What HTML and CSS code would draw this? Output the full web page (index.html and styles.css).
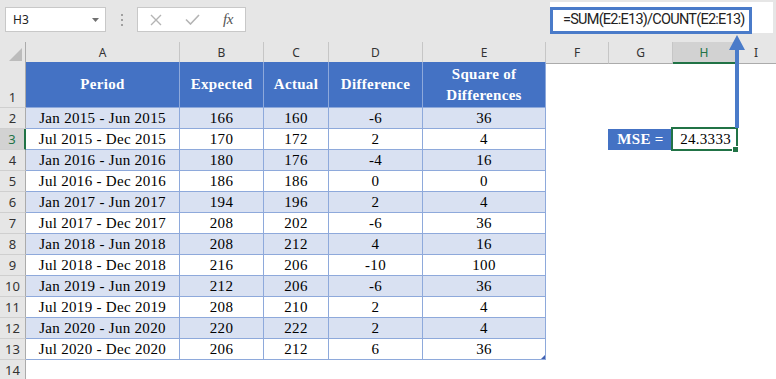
FILE: index.html
```html
<!DOCTYPE html>
<html>
<head>
<meta charset="utf-8">
<link rel="stylesheet" href="styles.css">
</head>
<body>
<div class="topbar">
  <div class="namebox"><span>H3</span><svg width="7" height="4" viewBox="0 0 7 4"><polygon points="0,0 7,0 3.5,4" fill="#707070"/></svg></div>
  <div class="sep"><svg width="4" height="14" viewBox="0 0 4 14"><rect x="1" y="1" width="2" height="2" fill="#a0a0a0"/><rect x="1" y="6" width="2" height="2" fill="#a0a0a0"/><rect x="1" y="11" width="2" height="2" fill="#a0a0a0"/></svg></div>
  <div class="fxbox">
    <svg class="ic-x" width="12" height="12" viewBox="0 0 12 12"><path d="M1 1L11 11M11 1L1 11" stroke="#b4b4b4" stroke-width="1.4"/></svg>
    <svg class="ic-ok" width="15" height="11" viewBox="0 0 15 11"><path d="M1 5.5L5.5 10L14 1" fill="none" stroke="#b4b4b4" stroke-width="1.6"/></svg>
    <span class="fx">fx</span>
  </div>
  <div class="formula"><div class="fbox">=SUM(E2:E13)/COUNT(E2:E13)</div></div>
</div>

<div class="sheet">
  <div class="row colhdr">
    <div class="corner"><svg width="13" height="13" viewBox="0 0 13 13"><polygon points="13,0 13,13 0,13" fill="#bcbcbc"/></svg></div>
    <div class="ch">A</div><div class="ch">B</div><div class="ch">C</div><div class="ch">D</div><div class="ch">E</div><div class="ch">F</div><div class="ch">G</div><div class="ch sel">H</div><div class="ch last">I</div>
  </div>
  <div class="row r1">
    <div class="rh">1</div>
    <div class="c h">Period</div><div class="c h">Expected</div><div class="c h">Actual</div><div class="c h">Difference</div><div class="c h">Square of<br>Differences</div>
    <div></div><div></div><div></div><div></div>
  </div>
  <div class="row alt"><div class="rh">2</div><div class="c">Jan 2015 - Jun 2015</div><div class="c">166</div><div class="c">160</div><div class="c">-6</div><div class="c">36</div><div></div><div></div><div></div><div></div></div>
  <div class="row"><div class="rh sel">3</div><div class="c">Jul 2015 - Dec 2015</div><div class="c">170</div><div class="c">172</div><div class="c">2</div><div class="c">4</div><div></div><div class="mse">MSE =</div><div class="val">24.3333<span class="handle"></span></div><div></div></div>
  <div class="row alt"><div class="rh">4</div><div class="c">Jan 2016 - Jun 2016</div><div class="c">180</div><div class="c">176</div><div class="c">-4</div><div class="c">16</div><div></div><div></div><div></div><div></div></div>
  <div class="row"><div class="rh">5</div><div class="c">Jul 2016 - Dec 2016</div><div class="c">186</div><div class="c">186</div><div class="c">0</div><div class="c">0</div><div></div><div></div><div></div><div></div></div>
  <div class="row alt"><div class="rh">6</div><div class="c">Jan 2017 - Jun 2017</div><div class="c">194</div><div class="c">196</div><div class="c">2</div><div class="c">4</div><div></div><div></div><div></div><div></div></div>
  <div class="row"><div class="rh">7</div><div class="c">Jul 2017 - Dec 2017</div><div class="c">208</div><div class="c">202</div><div class="c">-6</div><div class="c">36</div><div></div><div></div><div></div><div></div></div>
  <div class="row alt"><div class="rh">8</div><div class="c">Jan 2018 - Jun 2018</div><div class="c">208</div><div class="c">212</div><div class="c">4</div><div class="c">16</div><div></div><div></div><div></div><div></div></div>
  <div class="row"><div class="rh">9</div><div class="c">Jul 2018 - Dec 2018</div><div class="c">216</div><div class="c">206</div><div class="c">-10</div><div class="c">100</div><div></div><div></div><div></div><div></div></div>
  <div class="row alt"><div class="rh">10</div><div class="c">Jan 2019 - Jun 2019</div><div class="c">212</div><div class="c">206</div><div class="c">-6</div><div class="c">36</div><div></div><div></div><div></div><div></div></div>
  <div class="row"><div class="rh">11</div><div class="c">Jul 2019 - Dec 2019</div><div class="c">208</div><div class="c">210</div><div class="c">2</div><div class="c">4</div><div></div><div></div><div></div><div></div></div>
  <div class="row alt"><div class="rh">12</div><div class="c">Jan 2020 - Jun 2020</div><div class="c">220</div><div class="c">222</div><div class="c">2</div><div class="c">4</div><div></div><div></div><div></div><div></div></div>
  <div class="row"><div class="rh">13</div><div class="c">Jul 2020 - Dec 2020</div><div class="c">206</div><div class="c">212</div><div class="c">6</div><div class="c end">36</div><div></div><div></div><div></div><div></div></div>
  <div class="row"><div class="rh">14</div><div></div><div></div><div></div><div></div><div></div><div></div><div></div><div></div><div></div></div>
</div>

<svg class="arrow" width="18" height="96" viewBox="0 0 18 96"><polygon points="9,2 17,17 1,17" fill="#4a7bc9"/><rect x="7" y="15" width="4" height="80" fill="#4a7bc9"/></svg>
</body>
</html>
```

FILE: styles.css
```css
body {
  margin: 0;
  width: 776px;
  height: 379px;
  overflow: hidden;
  background: #fff;
  position: relative;
  font-family: "Noto Sans", "Liberation Sans", sans-serif;
}

.topbar {
  height: 42px;
  background: #e6e6e6;
  display: flex;
  align-items: flex-start;
}

.namebox {
  margin: 7px 0 0 5px;
  width: 101px;
  height: 25px;
  box-sizing: border-box;
  border: 1px solid #c8c8c8;
  background: #fff;
  display: flex;
  align-items: center;
  justify-content: space-between;
  padding: 0 6px 0 7px;
  font-size: 12px;
  color: #222;
}

.sep {
  width: 31px;
  height: 25px;
  margin-top: 7px;
  display: flex;
  align-items: center;
  justify-content: center;
}

.fxbox {
  margin-top: 7px;
  width: 109px;
  height: 25px;
  box-sizing: border-box;
  border: 1px solid #c8c8c8;
  background: #fff;
  display: flex;
  align-items: center;
}

.ic-x { margin-left: 12px; }
.ic-ok { margin-left: 23px; }

.fx {
  margin-left: 23px;
  font-family: "Liberation Serif", serif;
  font-style: italic;
  font-size: 15px;
  color: #555;
  letter-spacing: -0.5px;
}

.formula {
  margin: 2px 0 0 304px;
  width: 223px;
  height: 31px;
  background: #fff;
}

.fbox {
  margin-top: 5px;
  width: 202px;
  height: 27px;
  box-sizing: border-box;
  border: 3px solid #4a7bc9;
  padding-left: 10px;
  font-family: Roboto, "Liberation Sans", sans-serif;
  font-size: 14.5px;
  letter-spacing: -0.75px;
  line-height: 20px;
  color: #222;
  white-space: nowrap;
  overflow: hidden;
}

.row {
  display: grid;
  grid-template-columns: 26px 154px 84px 65px 94px 123px 63px 64px 63px 1fr;
  height: 21px;
}

.row > div { box-sizing: border-box; }

.colhdr { height: 20px; }
.r1 { height: 46px; }

.corner {
  background: #e6e6e6;
  border-right: 1px solid #ababab;
  border-bottom: 1px solid #ababab;
  display: flex;
  align-items: flex-end;
  justify-content: flex-end;
  padding: 0 3px 2px 0;
}

.ch {
  background: #e6e6e6;
  border-right: 1px solid #c6c6c6;
  border-bottom: 1px solid #ababab;
  font-size: 12px;
  color: #333;
  text-align: center;
  line-height: 19px;
  padding-top: 1px;
}

.ch.last { border-right: none; }

.ch.sel {
  background: #d2d2d2;
  color: #217346;
  border-bottom: 2px solid #217346;
}

.rh {
  background: #e6e6e6;
  border-right: 1px solid #ababab;
  border-bottom: 1px solid #cfcfcf;
  font-size: 13px;
  color: #333;
  display: flex;
  align-items: center;
  justify-content: center;
  line-height: 20px;
}

.r1 .rh { align-items: flex-end; }

.rh.sel {
  background: #d2d2d2;
  color: #217346;
  border-right: 2px solid #217346;
}

.c {
  display: flex;
  align-items: center;
  justify-content: center;
  font-family: "Liberation Serif", serif;
  font-size: 15px;
  letter-spacing: 0.3px;
  color: #000;
  border-right: 1px solid #8ea9db;
  border-bottom: 1px solid #8ea9db;
  line-height: 20px;
  white-space: nowrap;
}

.alt .c { background: #d9e1f2; }

.c.h {
  background: #4472c4;
  color: #fff;
  font-weight: bold;
  text-align: center;
  line-height: 21px;
}

.c.end { position: relative; }
.c.end::after {
  content: "";
  position: absolute;
  right: 0;
  bottom: 0;
  border-left: 4px solid transparent;
  border-bottom: 4px solid #3f5fb0;
}

.mse {
  background: #4472c4;
  color: #fff;
  font-family: "Liberation Serif", serif;
  font-weight: bold;
  font-size: 15px;
  letter-spacing: 0.3px;
  display: flex;
  align-items: center;
  justify-content: center;
  margin-left: -1px;
}

.val {
  position: relative;
  font-family: "Liberation Serif", serif;
  font-size: 15px;
  letter-spacing: 0.3px;
  text-align: right;
  padding-right: 5px;
  line-height: 20px;
}

.val::before {
  content: "";
  position: absolute;
  left: -2px;
  top: -2px;
  right: -2px;
  bottom: -1px;
  border: 2px solid #217346;
}

.handle {
  position: absolute;
  left: 59px;
  top: 17px;
  width: 5px;
  height: 5px;
  background: #217346;
  border: 1px solid #fff;
}

.arrow {
  position: absolute;
  left: 728px;
  top: 33px;
}
```
